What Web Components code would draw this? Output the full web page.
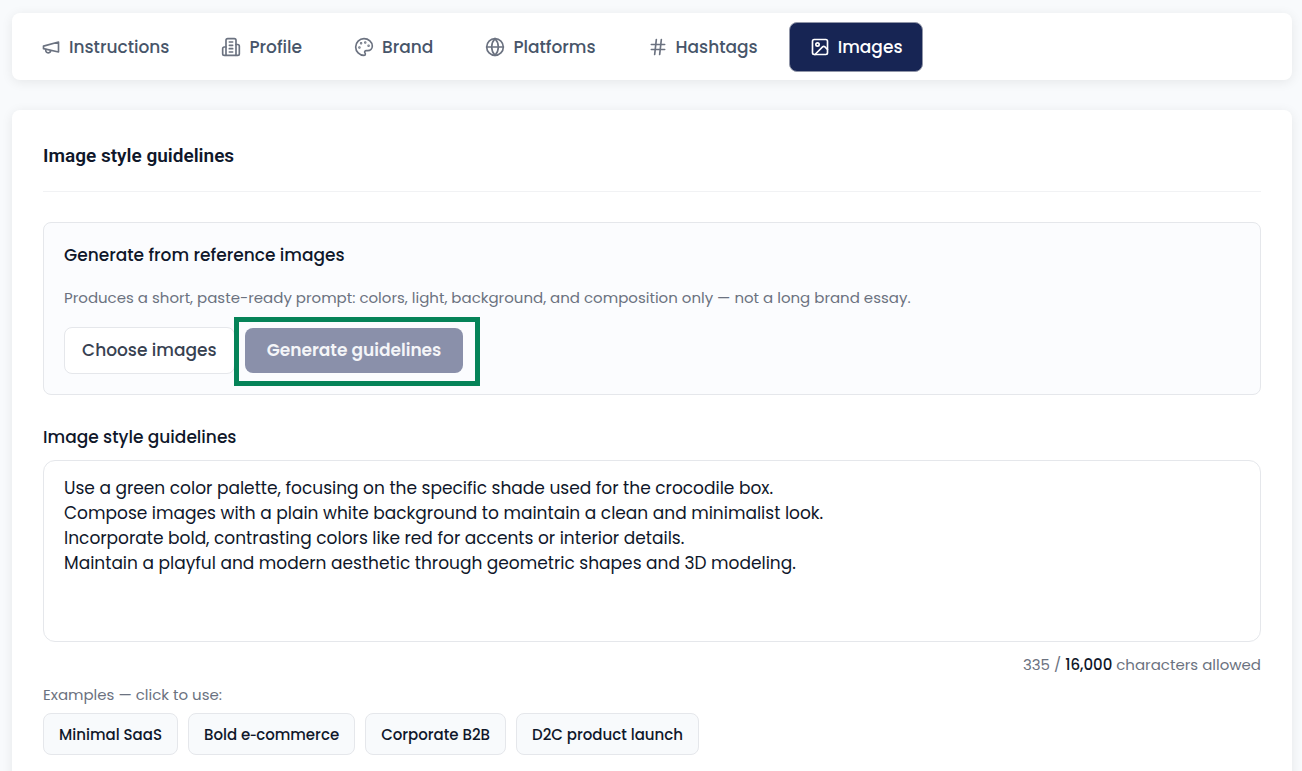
<!DOCTYPE html>
<html lang="en">
<head>
<meta charset="UTF-8">
<meta name="viewport" content="width=device-width, initial-scale=1.0">
<title>Image style guidelines</title>
<style>
  :root {
    --navy: #172554;
    --ink: #0f172a;
    --body: #475569;
    --muted: #6b7280;
    --line: #e5e7eb;
    --soft: #f8fafc;
    --shadow: 0 2px 12px rgba(0, 0, 0, 0.08);
    scrollbar-width: none;
  }
  body {
    margin: 0;
    background: var(--soft);
    color: var(--ink);
    font-family: Poppins, Inter, sans-serif;
    font-size: 17px;
    line-height: 25px;
  }
</style>
</head>
<body>
<settings-page>
  <tab-bar slot="nav">
    <tab-item icon="megaphone">Instructions</tab-item>
    <tab-item icon="building">Profile</tab-item>
    <tab-item icon="palette">Brand</tab-item>
    <tab-item icon="globe">Platforms</tab-item>
    <tab-item icon="hash">Hashtags</tab-item>
    <tab-item icon="image" active>Images</tab-item>
  </tab-bar>
  <settings-card heading="Image style guidelines">
    <generate-panel>
      <span slot="title">Generate from reference images</span>
      <span slot="hint">Produces a short, paste-ready prompt: colors, light, background, and composition only — not a long brand essay.</span>
    </generate-panel>
    <guidelines-field label="Image style guidelines" max="16000">Use a green color palette, focusing on the specific shade used for the crocodile box.
Compose images with a plain white background to maintain a clean and minimalist look.
Incorporate bold, contrasting colors like red for accents or interior details.
Maintain a playful and modern aesthetic through geometric shapes and 3D modeling.</guidelines-field>
    <example-list>
      <example-chip>Minimal SaaS</example-chip>
      <example-chip>Bold e&#8209;commerce</example-chip>
      <example-chip>Corporate B2B</example-chip>
      <example-chip>D2C product launch</example-chip>
    </example-list>
  </settings-card>
</settings-page>

<script>
const ICONS = {
  megaphone: '<path d="m3 11 18-5v12L3 14v-3z"/><path d="M11.6 16.8a3 3 0 1 1-5.8-1.6"/>',
  building: '<path d="M6 22V4a2 2 0 0 1 2-2h8a2 2 0 0 1 2 2v18Z"/><path d="M6 12H4a2 2 0 0 0-2 2v6a2 2 0 0 0 2 2h2"/><path d="M18 9h2a2 2 0 0 1 2 2v9a2 2 0 0 1-2 2h-2"/><path d="M10 6h4M10 10h4M10 14h4M10 18h4"/>',
  palette: '<circle cx="13.5" cy="6.5" r=".5" fill="currentColor"/><circle cx="17.5" cy="10.5" r=".5" fill="currentColor"/><circle cx="8.5" cy="7.5" r=".5" fill="currentColor"/><circle cx="6.5" cy="12.5" r=".5" fill="currentColor"/><path d="M12 2C6.5 2 2 6.5 2 12s4.5 10 10 10c.926 0 1.648-.746 1.648-1.688 0-.437-.18-.835-.437-1.125-.29-.289-.438-.652-.438-1.125a1.64 1.64 0 0 1 1.668-1.668h1.996c3.051 0 5.555-2.503 5.555-5.554C21.965 6.012 17.461 2 12 2z"/>',
  globe: '<circle cx="12" cy="12" r="10"/><path d="M12 2a14.5 14.5 0 0 0 0 20 14.5 14.5 0 0 0 0-20"/><path d="M2 12h20"/>',
  hash: '<path d="M4 9h16M4 15h16M10 3 8 21M16 3l-2 18"/>',
  image: '<rect x="3" y="3" width="18" height="18" rx="2"/><circle cx="9" cy="9" r="2"/><path d="m21 15-3.086-3.086a2 2 0 0 0-2.828 0L6 21"/>'
};

class SettingsPage extends HTMLElement {
  constructor() {
    super();
    this.attachShadow({ mode: 'open' }).innerHTML = `
      <style>
        :host {
          display: flex;
          flex-direction: column;
          gap: 30px;
          padding: 13px 10px 0 12px;
        }
      </style>
      <slot name="nav"></slot>
      <slot></slot>
    `;
  }
}

class TabBar extends HTMLElement {
  constructor() {
    super();
    this.attachShadow({ mode: 'open' }).innerHTML = `
      <style>
        :host {
          display: block;
          background: #fff;
          border-radius: 8px;
          box-shadow: var(--shadow);
        }
        nav {
          display: flex;
          gap: 10px;
          padding: 9px 8px 8px;
        }
      </style>
      <nav aria-label="Settings sections"><slot></slot></nav>
    `;
  }
}

class TabItem extends HTMLElement {
  constructor() {
    super();
    this.attachShadow({ mode: 'open' });
  }

  connectedCallback() {
    this.shadowRoot.innerHTML = `
      <style>
        :host { display: block; }
        button {
          display: flex;
          align-items: center;
          gap: 8px;
          height: 50px;
          padding: 0 20px;
          border: 1px solid transparent;
          border-radius: 8px;
          background: none;
          color: var(--body);
          font: inherit;
          font-weight: 500;
          cursor: pointer;
        }
        svg {
          width: 20px;
          height: 20px;
          color: var(--muted);
        }
        :host([active]) button {
          background: var(--navy);
          border-color: #9196a8;
          color: #fff;
        }
        :host([active]) svg { color: #fff; }
      </style>
      <button type="button">
        <svg viewBox="0 0 24 24" fill="none" stroke="currentColor" stroke-width="2" stroke-linecap="round" stroke-linejoin="round" aria-hidden="true">${ICONS[this.getAttribute('icon')]}</svg>
        <slot></slot>
      </button>
    `;
  }
}

class SettingsCard extends HTMLElement {
  constructor() {
    super();
    this.attachShadow({ mode: 'open' });
  }

  connectedCallback() {
    this.shadowRoot.innerHTML = `
      <style>
        :host {
          display: block;
          padding: 31px;
          background: #fff;
          border-radius: 8px;
          box-shadow: var(--shadow);
        }
        h2 {
          margin: 0 0 30px;
          padding: 2px 0 22px;
          border-bottom: 1px solid #f1f2f4;
          font: 600 19px/26px Roboto, sans-serif;
        }
      </style>
      <h2>${this.getAttribute('heading')}</h2>
      <slot></slot>
    `;
  }
}

class GeneratePanel extends HTMLElement {
  constructor() {
    super();
    this.attachShadow({ mode: 'open' }).innerHTML = `
      <style>
        :host {
          display: block;
          padding: 20px;
          border: 1px solid var(--line);
          border-radius: 8px;
          background: #fbfcfe;
        }
        h3 {
          margin: 0 0 18px;
          font-size: 17px;
          font-weight: 500;
        }
        p {
          margin: 0 0 17px;
          color: var(--muted);
          font-size: 15px;
          line-height: 24px;
        }
        .actions {
          display: flex;
          align-items: center;
          gap: 10px;
        }
        button {
          height: 47px;
          padding: 0 17px;
          border: 1px solid var(--line);
          border-radius: 8px;
          background: #fff;
          color: #374151;
          font: inherit;
          font-weight: 500;
        }
        .generate {
          height: 45px;
          padding: 0 22px;
          border: 0;
          background: #8a90aa;
          color: #f4f5f8;
          font-weight: 600;
        }
        .highlight {
          position: relative;
          display: flex;
        }
        /* green callout frame, drawn over the row */
        .highlight::before {
          content: "";
          position: absolute;
          inset: -11px -17px -13px -11px;
          border: 5px solid #058358;
          background: #fbfcfe;
        }
        .highlight button { position: relative; }
      </style>
      <h3><slot name="title"></slot></h3>
      <p><slot name="hint"></slot></p>
      <div class="actions">
        <button type="button">Choose images</button>
        <div class="highlight">
          <button type="button" class="generate" disabled>Generate guidelines</button>
        </div>
      </div>
    `;
  }
}

class GuidelinesField extends HTMLElement {
  constructor() {
    super();
    this.attachShadow({ mode: 'open' });
  }

  connectedCallback() {
    const max = Number(this.getAttribute('max'));
    this.shadowRoot.innerHTML = `
      <style>
        :host {
          display: block;
          margin-top: 30px;
        }
        label {
          display: block;
          margin-bottom: 10px;
          font-weight: 500;
        }
        textarea {
          display: block;
          box-sizing: border-box;
          width: 100%;
          padding: 15px 20px;
          border: 1px solid var(--line);
          border-radius: 12px;
          background: #fff;
          color: var(--ink);
          font: inherit;
          resize: none;
        }
        .counter {
          margin: 11px 0 6px;
          color: var(--muted);
          font-size: 15px;
          line-height: 24px;
          text-align: right;
        }
        strong {
          color: var(--ink);
          font-weight: 500;
        }
      </style>
      <label for="guidelines">${this.getAttribute('label')}</label>
      <textarea id="guidelines" rows="6" maxlength="${max}"></textarea>
      <div class="counter"><span id="count"></span> / <strong>${max.toLocaleString('en-US')}</strong> characters allowed</div>
    `;

    const textarea = this.shadowRoot.getElementById('guidelines');
    const count = this.shadowRoot.getElementById('count');
    // line breaks are submitted as CRLF, so each one counts twice
    const update = () => {
      count.textContent = textarea.value.replace(/\n/g, '\r\n').length;
    };

    textarea.value = this.textContent.trim();
    textarea.addEventListener('input', update);
    update();
  }
}

class ExampleList extends HTMLElement {
  constructor() {
    super();
    this.attachShadow({ mode: 'open' }).innerHTML = `
      <style>
        :host { display: block; }
        p {
          margin: 0 0 6px;
          color: var(--muted);
          font-size: 15px;
          line-height: 24px;
        }
        .chips {
          display: flex;
          flex-wrap: wrap;
          gap: 10px;
        }
      </style>
      <p>Examples — click to use:</p>
      <div class="chips"><slot></slot></div>
    `;
  }
}

class ExampleChip extends HTMLElement {
  constructor() {
    super();
    this.attachShadow({ mode: 'open' }).innerHTML = `
      <style>
        :host { display: block; }
        button {
          height: 42px;
          padding: 0 15px;
          border: 1px solid var(--line);
          border-radius: 8px;
          background: var(--soft);
          color: var(--ink);
          font: inherit;
          font-size: 15px;
          font-weight: 500;
          cursor: pointer;
        }
      </style>
      <button type="button"><slot></slot></button>
    `;
  }
}

customElements.define('settings-page', SettingsPage);
customElements.define('tab-bar', TabBar);
customElements.define('tab-item', TabItem);
customElements.define('settings-card', SettingsCard);
customElements.define('generate-panel', GeneratePanel);
customElements.define('guidelines-field', GuidelinesField);
customElements.define('example-list', ExampleList);
customElements.define('example-chip', ExampleChip);
</script>
</body>
</html>
